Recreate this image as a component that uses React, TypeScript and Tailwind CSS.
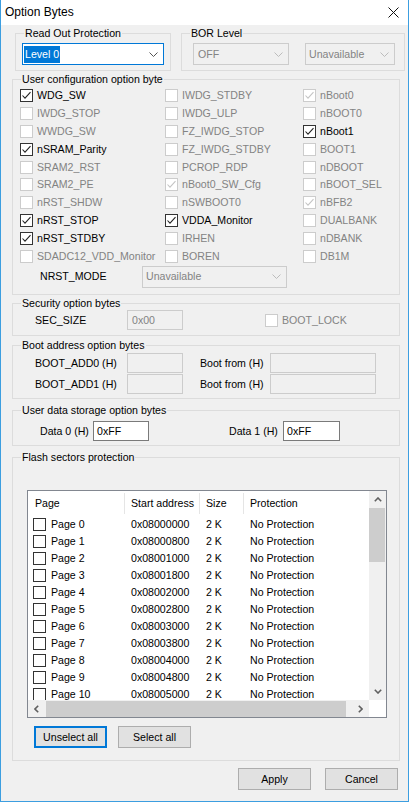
import React from "react";

const GRAY = "text-[#838383]";

function Cb({ checked = false, disabled = false }: { checked?: boolean; disabled?: boolean }) {
  return (
    <span
      className={
        disabled
          ? "flex shrink-0 w-[13px] h-[13px] border border-[#cccccc] bg-white items-center justify-center"
          : "flex shrink-0 w-[13px] h-[13px] border border-[#333333] bg-white items-center justify-center"
      }
    >
      {checked && (
        <svg width="11" height="11" viewBox="0 0 11 11">
          <path
            d="M1.5 5.5 L4 8.2 L9.5 2.2"
            stroke={disabled ? "#c4c4c4" : "#222222"}
            strokeWidth="1.1"
            fill="none"
          />
        </svg>
      )}
    </span>
  );
}

function Chevron({ color }: { color: string }) {
  return (
    <svg width="9" height="5" viewBox="0 0 9 5">
      <path d="M0.5 0.5 L4.5 4.5 L8.5 0.5" stroke={color} strokeWidth="1" fill="none" />
    </svg>
  );
}

function CheckRow({ label, checked, disabled }: { label: string; checked?: boolean; disabled?: boolean }) {
  return (
    <div className="flex items-center h-[17.8px] gap-[4px]">
      <Cb checked={checked} disabled={disabled} />
      <span className={disabled ? "text-[#838383] whitespace-nowrap" : "text-black whitespace-nowrap"}>{label}</span>
    </div>
  );
}

const col1: [string, boolean, boolean][] = [
  ["WDG_SW", true, false],
  ["IWDG_STOP", false, true],
  ["WWDG_SW", false, true],
  ["nSRAM_Parity", true, false],
  ["SRAM2_RST", false, true],
  ["SRAM2_PE", false, true],
  ["nRST_SHDW", false, true],
  ["nRST_STOP", true, false],
  ["nRST_STDBY", true, false],
  ["SDADC12_VDD_Monitor", false, true],
];
const col2: [string, boolean, boolean][] = [
  ["IWDG_STDBY", false, true],
  ["IWDG_ULP", false, true],
  ["FZ_IWDG_STOP", false, true],
  ["FZ_IWDG_STDBY", false, true],
  ["PCROP_RDP", false, true],
  ["nBoot0_SW_Cfg", true, true],
  ["nSWBOOT0", false, true],
  ["VDDA_Monitor", true, false],
  ["IRHEN", false, true],
  ["BOREN", false, true],
];
const col3: [string, boolean, boolean][] = [
  ["nBoot0", true, true],
  ["nBOOT0", false, true],
  ["nBoot1", true, false],
  ["BOOT1", false, true],
  ["nDBOOT", false, true],
  ["nBOOT_SEL", false, true],
  ["nBFB2", true, true],
  ["DUALBANK", false, true],
  ["nDBANK", false, true],
  ["DB1M", false, true],
];

function Legend({ children }: { children: React.ReactNode }) {
  return <legend className="ml-[8px] px-[1px] leading-[13px] h-[13px] text-black">{children}</legend>;
}

function DisabledInput({ w, text = "" }: { w: string; text?: string }) {
  return (
    <div className={`${w} h-[20px] border border-[#cccccc] bg-[#f0f0f0] flex items-center pl-[4px] ${GRAY}`}>{text}</div>
  );
}

function Btn({ label, focused, w = "w-[73px]" }: { label: string; focused?: boolean; w?: string }) {
  return (
    <div
      className={
        focused
          ? `${w} h-[22px] border-2 border-[#0078d7] bg-[#e1e1e1] flex items-center justify-center text-black`
          : `${w} h-[22px] border border-[#adadad] bg-[#e1e1e1] flex items-center justify-center text-black`
      }
    >
      {label}
    </div>
  );
}

const pages = Array.from({ length: 11 }, (_, i) => ({
  name: `Page ${i}`,
  addr: "0x" + (0x08000000 + i * 0x800).toString(16).toUpperCase().padStart(8, "0"),
}));

export default function App() {
  return (
    <div className="w-[409px] h-[802px] border-x border-b border-[#3c9ee0] bg-[#f0f0f0] font-['Liberation_Sans',Arial,sans-serif] text-[10.6px] leading-[13px] text-black overflow-hidden">
      {/* Title bar */}
      <div className="h-[25px] bg-white flex items-center justify-between pl-[4px] pr-[9px]">
        <span className="text-[12px] text-black">Option Bytes</span>
        <svg width="11" height="11" viewBox="0 0 11 11">
          <path d="M0.5 0.5 L10.5 10.5 M10.5 0.5 L0.5 10.5" stroke="#111" strokeWidth="1" />
        </svg>
      </div>

      {/* Row 1 */}
      <div className="flex mt-[2px] ml-[14px]">
        <fieldset className="w-[156px] h-[44px] border border-[#dcdcdc] m-0 p-0">
          <Legend>Read Out Protection</Legend>
          <div className="mt-[3px] ml-[6px] w-[142px] h-[22px] border border-[#0078d7] bg-white flex items-center justify-between pl-[1px] pr-[5px]">
            <span className="bg-[#0078d7] text-white h-[17px] flex items-center px-[1px]">Level 0</span>
            <Chevron color="#555555" />
          </div>
        </fieldset>
        <fieldset className="ml-[10px] w-[224px] h-[44px] border border-[#dcdcdc] m-0 p-0">
          <Legend>BOR Level</Legend>
          <div className="mt-[3px] ml-[11px] flex gap-[16px]">
            <div className="w-[96px] h-[22px] border border-[#cccccc] bg-[#f0f0f0] flex items-center justify-between pl-[4px] pr-[5px]">
              <span className={GRAY}>OFF</span>
              <Chevron color="#bcbcbc" />
            </div>
            <div className="w-[90px] h-[22px] border border-[#cccccc] bg-[#f0f0f0] flex items-center justify-between pl-[3px] pr-[5px]">
              <span className={GRAY}>Unavailable</span>
              <Chevron color="#bcbcbc" />
            </div>
          </div>
        </fieldset>
      </div>

      {/* User configuration */}
      <fieldset className="mt-[2px] ml-[11px] w-[388px] h-[222px] border border-[#dcdcdc] m-0 p-0">
        <Legend>User configuration option byte</Legend>
        <div className="mt-[1px] ml-[7px] flex">
          <div className="w-[145px] flex flex-col">
            {col1.map(([l, c, d]) => (
              <CheckRow key={l} label={l} checked={c} disabled={d} />
            ))}
          </div>
          <div className="w-[138px] flex flex-col">
            {col2.map(([l, c, d]) => (
              <CheckRow key={l} label={l} checked={c} disabled={d} />
            ))}
          </div>
          <div className="flex flex-col">
            {col3.map(([l, c, d]) => (
              <CheckRow key={l} label={l} checked={c} disabled={d} />
            ))}
          </div>
        </div>
        <div className="flex items-center mt-[1px] ml-[27px]">
          <span className="w-[102px]">NRST_MODE</span>
          <div className="w-[145px] h-[22px] border border-[#cccccc] bg-[#f0f0f0] flex items-center justify-between pl-[3px] pr-[5px]">
            <span className={GRAY}>Unavailable</span>
            <Chevron color="#bcbcbc" />
          </div>
        </div>
      </fieldset>

      {/* Security */}
      <fieldset className="mt-[2px] ml-[11px] w-[388px] h-[39px] border border-[#dcdcdc] m-0 p-0">
        <Legend>Security option bytes</Legend>
        <div className="flex items-center h-[20px]">
          <span className="ml-[22px] w-[92px]">SEC_SIZE</span>
          <DisabledInput w="w-[56px]" text="0x00" />
          <div className="ml-[82px] flex items-center gap-[4px]">
            <Cb disabled />
            <span className={GRAY}>BOOT_LOCK</span>
          </div>
        </div>
      </fieldset>

      {/* Boot address */}
      <fieldset className="mt-[3px] ml-[11px] w-[388px] h-[60px] border border-[#dcdcdc] m-0 p-0">
        <Legend>Boot address option bytes</Legend>
        <div className="mt-[1px] flex flex-col gap-[1px]">
          {["BOOT_ADD0 (H)", "BOOT_ADD1 (H)"].map((l) => (
            <div key={l} className="flex items-center h-[20px]">
              <span className="ml-[22px] w-[92px]">{l}</span>
              <DisabledInput w="w-[56px]" />
              <span className="ml-[17px] w-[70px]">Boot from (H)</span>
              <DisabledInput w="w-[106px]" />
            </div>
          ))}
        </div>
      </fieldset>

      {/* User data */}
      <fieldset className="mt-[5px] ml-[11px] w-[388px] h-[42px] border border-[#dcdcdc] m-0 p-0">
        <Legend>User data storage option bytes</Legend>
        <div className="mt-[4px] flex items-center h-[20px]">
          <span className="ml-[27px] w-[53px]">Data 0 (H)</span>
          <div className="w-[56px] h-[20px] border border-[#7a7a7a] bg-white flex items-center pl-[3px]">0xFF</div>
          <span className="ml-[80px] w-[54px]">Data 1 (H)</span>
          <div className="w-[57px] h-[20px] border border-[#7a7a7a] bg-white flex items-center pl-[3px]">0xFF</div>
        </div>
      </fieldset>

      {/* Flash sectors */}
      <fieldset className="mt-[5px] ml-[11px] w-[388px] h-[310px] border border-[#dcdcdc] m-0 p-0">
        <Legend>Flash sectors protection</Legend>
        <div className="mt-[26px] ml-[14px] w-[360px] h-[228px] border border-[#828790] bg-white flex flex-col">
          <div className="flex h-[209px]">
            <div className="w-[341px] overflow-hidden">
              <div className="flex h-[25px] items-center">
                <div className="w-[96px] h-[21px] flex items-center pl-[7px]">Page</div>
                <div className="w-[75px] h-[21px] flex items-center pl-[6px] border-l border-[#e5e5e5]">Start address</div>
                <div className="w-[44px] h-[21px] flex items-center pl-[6px] border-l border-[#e5e5e5]">Size</div>
                <div className="flex-1 h-[21px] flex items-center pl-[6px] border-l border-[#e5e5e5]">Protection</div>
              </div>
              {pages.map((p) => (
                <div key={p.name} className="flex h-[17px] items-center">
                  <div className="w-[96px] flex items-center pl-[5px] gap-[5px]">
                    <Cb />
                    <span>{p.name}</span>
                  </div>
                  <div className="w-[75px] pl-[7px]">{p.addr}</div>
                  <div className="w-[44px] pl-[7px]">2 K</div>
                  <div className="flex-1 pl-[7px] whitespace-nowrap">No Protection</div>
                </div>
              ))}
            </div>
            <div className="w-[17px] bg-[#f0f0f0] flex flex-col">
              <div className="h-[17px] flex items-center justify-center">
                <svg width="8" height="5" viewBox="0 0 8 5">
                  <path d="M0.8 4.2 L4 1 L7.2 4.2" stroke="#606060" strokeWidth="1.6" fill="none" />
                </svg>
              </div>
              <div className="h-[54px] w-[16px] bg-[#cdcdcd]" />
              <div className="flex-1" />
              <div className="h-[17px] flex items-center justify-center">
                <svg width="8" height="5" viewBox="0 0 8 5">
                  <path d="M0.8 0.8 L4 4 L7.2 0.8" stroke="#606060" strokeWidth="1.6" fill="none" />
                </svg>
              </div>
            </div>
          </div>
          <div className="flex h-[17px]">
            <div className="w-[341px] bg-[#f0f0f0] flex items-center">
              <div className="w-[17px] h-[17px] flex items-center justify-center">
                <svg width="5" height="8" viewBox="0 0 5 8">
                  <path d="M4.2 0.8 L1 4 L4.2 7.2" stroke="#606060" strokeWidth="1.6" fill="none" />
                </svg>
              </div>
              <div className="ml-[1px] w-[300px] h-[16px] bg-[#cdcdcd]" />
              <div className="flex-1" />
              <div className="w-[17px] h-[17px] flex items-center justify-center">
                <svg width="5" height="8" viewBox="0 0 5 8">
                  <path d="M0.8 0.8 L4 4 L0.8 7.2" stroke="#606060" strokeWidth="1.6" fill="none" />
                </svg>
              </div>
            </div>
            <div className="w-[17px] bg-white" />
          </div>
        </div>
        <div className="mt-[8px] ml-[21px] flex gap-[11px]">
          <Btn label="Unselect all" focused />
          <Btn label="Select all" />
        </div>
      </fieldset>

      {/* Bottom buttons */}
      <div className="mt-[7px] flex justify-end gap-[14px] mr-[10px]">
        <Btn label="Apply" />
        <Btn label="Cancel" />
      </div>
    </div>
  );
}
